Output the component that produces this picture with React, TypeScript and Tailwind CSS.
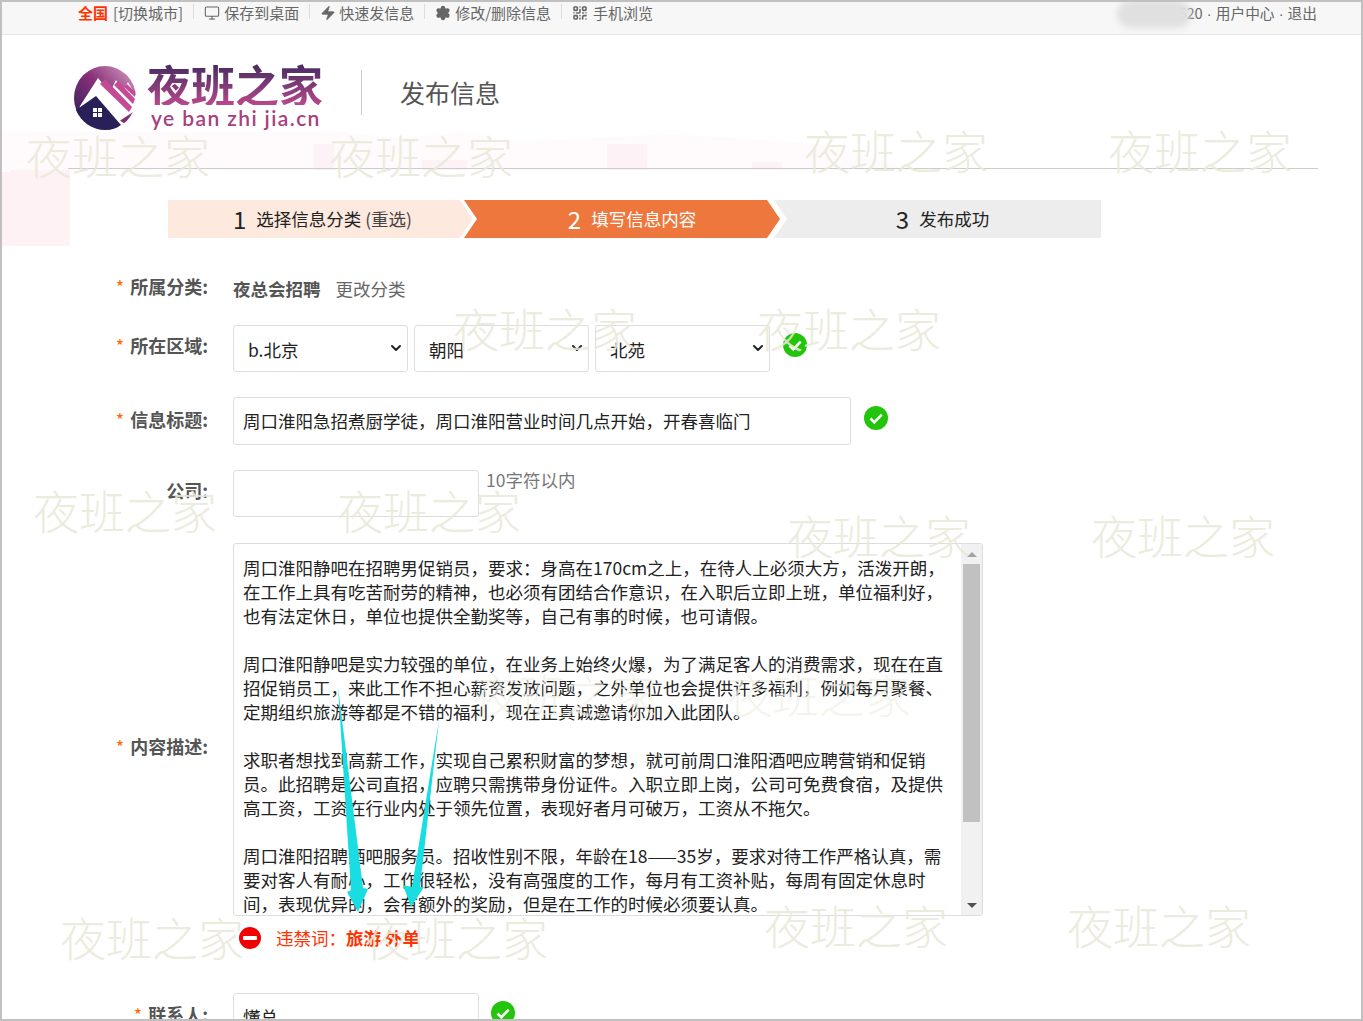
import React from 'react';
import { Monitor, Zap, Settings, QrCode, ChevronDown } from 'lucide-react';

const cjk = 'font-["Noto_Sans_CJK_SC","Liberation_Sans",sans-serif]';

const marks = [
  'left-[24px] top-[125px]',
  'left-[327px] top-[125px]',
  'left-[802px] top-[120px]',
  'left-[1106px] top-[120px]',
  'left-[451px] top-[298px]',
  'left-[755px] top-[298px]',
  'left-[31px] top-[480px]',
  'left-[335px] top-[480px]',
  'left-[785px] top-[505px]',
  'left-[1089px] top-[505px]',
  'left-[58px] top-[907px]',
  'left-[362px] top-[907px]',
  'left-[762px] top-[895px]',
  'left-[1065px] top-[895px]',
];

const descLines = [
  '周口淮阳静吧在招聘男促销员，要求：身高在170cm之上，在待人上必须大方，活泼开朗，',
  '在工作上具有吃苦耐劳的精神，也必须有团结合作意识，在入职后立即上班，单位福利好，',
  '也有法定休日，单位也提供全勤奖等，自己有事的时候，也可请假。',
  '',
  '周口淮阳静吧是实力较强的单位，在业务上始终火爆，为了满足客人的消费需求，现在在直',
  '招促销员工，来此工作不担心薪资发放问题，之外单位也会提供许多福利，例如每月聚餐、',
  '定期组织旅游等都是不错的福利，现在正真诚邀请你加入此团队。',
  '',
  '求职者想找到高薪工作，实现自己累积财富的梦想，就可前周口淮阳酒吧应聘营销和促销',
  '员。此招聘是公司直招，应聘只需携带身份证件。入职立即上岗，公司可免费食宿，及提供',
  '高工资，工资在行业内处于领先位置，表现好者月可破万，工资从不拖欠。',
  '',
  '周口淮阳招聘酒吧服务员。招收性别不限，年龄在18——35岁，要求对待工作严格认真，需',
  '要对客人有耐心，工作很轻松，没有高强度的工作，每月有工资补贴，每周有固定休息时',
  '间，表现优异的，会有额外的奖励，但是在工作的时候必须要认真。',
];

const OkIcon = () => (
  <svg viewBox="0 0 24 24" className="w-6 h-6 shrink-0">
    <circle cx="12" cy="12" r="12" fill="#22c40c" />
    <path d="M6.5 12.5l3.8 3.8 7.4-7.6" fill="none" stroke="#fff" strokeWidth="2.6" />
  </svg>
);

const Logo = () => (
  <svg viewBox="0 0 62 64" className="w-[62px] h-[64px] shrink-0">
    <defs>
      <linearGradient id="lg" x1="0" y1="1" x2="1" y2="0">
        <stop offset="0" stopColor="#231f55" />
        <stop offset="0.55" stopColor="#8a2f78" />
        <stop offset="1" stopColor="#d9a8c8" />
      </linearGradient>
    </defs>
    <ellipse cx="31" cy="32" rx="31" ry="32" fill="url(#lg)" />
    <path d="M6 40L24 12 36 26l6-12 7 10 5-8 8 14v14L32 64H2z" fill="#fff" />
    <path d="M26 18L55 46l3-5-27-28z" fill="#c54a96" />
    <path d="M40 19l19 19 2-5-17-18z" fill="#c54a96" />
    <path d="M50 21l11 10v-5l-8-8z" fill="#c54a96" />
    <path d="M15 33L51 58l-6 3-30-22z" fill="#fff" />
    <path d="M2 44L22 30l25 29c-4 3-10 5-16 5C18 64 7 56 2 44z" fill="#2a2058" />
    <path d="M19 42h9v9h-9z" fill="#fff" />
    <path d="M23 42h1v9h-1zM19 46h9v1h-9z" fill="#2a2058" />
  </svg>
);

const Sep = () => <span className="w-px h-[15px] bg-[#ddd] mx-[10px]" />;

const Dot = () => <span className='font-["Liberation_Sans",sans-serif]'> · </span>;

const Label = ({ text, star = true, className = '' }: { text: string; star?: boolean; className?: string }) => (
  <div className={`w-[206px] shrink-0 text-right text-[18px] leading-6 font-bold text-[#555] ${className}`}>
    {star && <span className="text-[#f60] font-normal mr-[6px]">*</span>}
    {text}
  </div>
);

const Area = ({ value }: { value: string }) => (
  <div className="relative">
    <select
      defaultValue={value}
      className="appearance-none w-[175px] h-[47px] pl-[14px] pt-[3px] border border-[#ddd] rounded-[3px] bg-white text-[17.5px] text-[#222]"
    >
      <option>{value}</option>
    </select>
    <ChevronDown className="absolute right-[4px] top-[15px] w-4 h-4 text-[#222] pointer-events-none" strokeWidth={3} />
  </div>
);

export default function App() {
  return (
    <div className={`relative w-[1363px] h-[1021px] overflow-hidden bg-white border-2 border-[#c0c0c0] ${cjk}`}>
      {/* faint skyline behind the header */}
      <svg className="absolute left-0 top-0 w-[1100px] h-[250px]" viewBox="0 0 1100 250">
        <path d="M0 170h8v-8h60v82H0z" fill="#fef2f5" />
        <path d="M0 130h340l60 6 60-6 60 10 150-8 150 10 60 16 20 10H0z" fill="#fffafb" />
        <path d="M312 142h20v26h-20zM420 158h45v10h-45zM605 142h40v26h-40zM750 160h30v8h-30z" fill="#fdf2f5" />
      </svg>

      {/* top bar */}
      <div className="relative h-[33px] bg-[#f7f7f7] border-b border-[#e6e6e6] flex items-start pt-[2px] pl-[76px] pr-[44px] text-[15px] leading-[18px] text-[#666]">
        <span className="text-[#f30] font-bold">全国</span>
        <span className="ml-[5px]">[切换城市]</span>
        <Sep />
        <Monitor className="w-[16px] h-[16px] mr-[4px] mt-px" strokeWidth={1.6} />
        <span>保存到桌面</span>
        <Sep />
        <Zap className="w-[16px] h-[16px] mr-[3px] mt-px fill-[#666]" strokeWidth={1} />
        <span>快速发信息</span>
        <Sep />
        <Settings className="w-[16px] h-[16px] mr-[4px] mt-px fill-[#666] text-[#666]" strokeWidth={2} />
        <span>修改/删除信息</span>
        <Sep />
        <QrCode className="w-[16px] h-[16px] mr-[5px] mt-px" strokeWidth={2.4} />
        <span>手机浏览</span>
        <span className="ml-auto relative whitespace-nowrap text-[14.7px]">
          <span className="inline-block w-[90px] text-right">520</span><Dot />用户中心<Dot />退出
          <span className="absolute right-[126px] top-[-4px] w-[74px] h-[28px] bg-[#e0e0e0] rounded-full blur-[3px]" />
        </span>
      </div>

      {/* logo row */}
      <div className="relative ml-[66px] w-[1250px] h-[134px] border-b border-[#ccc] pl-[6px] pt-[31px] flex items-start">
        <Logo />
        <div className="ml-[11px] -mt-[3px] w-[180px]">
          <div className="text-[44px] leading-[42px] font-bold bg-linear-to-b from-[#43295f] to-[#b8488c] bg-clip-text text-transparent whitespace-nowrap">
            夜班之家
          </div>
          <div className='pl-[4px] text-[21px] leading-[26px] tracking-[1.4px] font-semibold text-[#a8407f] whitespace-nowrap font-["Lato",sans-serif]'>
            ye ban zhi jia.cn
          </div>
        </div>
        <div className="ml-[34px] mt-[4px] w-px h-[45px] bg-[#ccc]" />
        <div className="ml-[38px] mt-[6px] text-[25px] leading-[40px] text-[#555] whitespace-nowrap">发布信息</div>
      </div>

      {/* steps */}
      <div className="relative ml-[166px] mt-[31px] h-[38px] flex text-[17.5px] text-[#222]">
        <div className="w-[305px] h-full bg-[#fee9df] flex items-center justify-center gap-[10px] pl-[4px] [clip-path:polygon(0_0,292px_0,305px_50%,292px_100%,0_100%)]">
          <span className="text-[24px]">1</span>
          <span>选择信息分类 <span className="text-[#444]">(重选)</span></span>
        </div>
        <div className="w-[316px] h-full -ml-[9px] bg-[#ed773c] text-white flex items-center justify-center gap-[10px] pl-[20px] [clip-path:polygon(0_0,303px_0,316px_50%,303px_100%,0_100%,13px_50%)]">
          <span className="text-[24px]">2</span>
          <span>填写信息内容</span>
        </div>
        <div className="w-[327px] h-full -ml-[6px] bg-[#ededed] flex items-center justify-center gap-[10px] pl-[10px] [clip-path:polygon(0_0,100%_0,100%_100%,0_100%,13px_50%)]">
          <span className="text-[24px]">3</span>
          <span>发布成功</span>
        </div>
      </div>

      {/* form */}
      <div className="relative pt-[37px]">
        <div className="flex gap-[25px] h-[27px] items-start">
          <Label text="所属分类:" className="-mt-px" />
          <div className="-mt-px text-[17.5px] leading-[30px] text-[#666] whitespace-nowrap">
            <span className="font-bold text-[#555]">夜总会招聘</span>
            <span className="ml-[15px]">更改分类</span>
          </div>
        </div>

        <div className="flex gap-[25px] mt-[23px] items-start">
          <Label text="所在区域:" className="mt-[8px]" />
          <div className="flex items-start gap-[6px]">
            <Area value="b.北京" />
            <Area value="朝阳" />
            <Area value="北苑" />
            <div className="ml-[7px] mt-[8px]"><OkIcon /></div>
          </div>
        </div>

        <div className="flex gap-[25px] mt-[25px] items-start">
          <Label text="信息标题:" className="mt-[10px]" />
          <input
            readOnly
            value="周口淮阳急招煮厨学徒，周口淮阳营业时间几点开始，开春喜临门"
            className="w-[618px] h-[48px] pl-[9px] pb-[2px] border border-[#ddd] rounded-[3px] bg-white text-[17.5px] text-[#222]"
          />
          <div className="-ml-[12px] mt-[9px]"><OkIcon /></div>
        </div>

        <div className="flex gap-[25px] mt-[25px] items-start">
          <Label text="公司:" star={false} className="mt-[8px]" />
          <input readOnly className="w-[246px] h-[47px] border border-[#ddd] rounded-[3px] bg-white" />
          <div className="-ml-[18px] -mt-[2px] text-[17.5px] leading-6 text-[#777]">10字符以内</div>
        </div>

        <div className="flex gap-[25px] mt-[26px] items-start">
          <Label text="内容描述:" className="mt-[191px]" />
          <div className="w-[750px] h-[373px] flex border border-[#ddd] rounded-[3px] bg-white overflow-hidden">
            <div className="flex-1 pl-[9px] pt-[12px] text-[17.5px] leading-6 text-[#222] whitespace-nowrap overflow-hidden">
              {descLines.map((line, i) => (
                <div key={i} className="h-6">{line}</div>
              ))}
            </div>
            <div className="w-[21px] h-full bg-[#f1f1f1] flex flex-col items-center">
              <div className="h-[20px] flex items-center justify-center">
                <div className="w-0 h-0 border-x-[5px] border-x-transparent border-b-[5px] border-b-[#a3a3a3]" />
              </div>
              <div className="w-[17px] h-[258px] bg-[#c1c1c1]" />
              <div className="mt-auto h-[20px] flex items-center justify-center">
                <div className="w-0 h-0 border-x-[5px] border-x-transparent border-t-[5px] border-t-[#505050]" />
              </div>
            </div>
          </div>
        </div>

        <div className="flex items-center h-[25px] mt-[9px] ml-[237px] text-[17.5px] leading-6 text-[#f30] whitespace-nowrap">
          <svg viewBox="0 0 22 22" className="w-[22px] h-[22px] shrink-0">
            <circle cx="11" cy="11" r="11" fill="#f00000" />
            <rect x="4" y="9" width="14" height="4" rx="1" fill="#fff" />
          </svg>
          <span className="ml-[15px]">违禁词：</span>
          <span className="font-bold">旅游 外单</span>
        </div>

        <div className="flex gap-[25px] mt-[43px] items-start">
          <Label text="联系人:" className="mt-[9px]" />
          <input
            readOnly
            value="懂总"
            className="w-[246px] h-[47px] pl-[9px] border border-[#ddd] rounded-[3px] bg-white text-[17.5px] text-[#222]"
          />
          <div className="-ml-[13px] mt-[8px]"><OkIcon /></div>
        </div>
      </div>

      {/* watermarks */}
      {marks.map(pos => (
        <div
          key={pos}
          className={`absolute ${pos} text-[46px] leading-[54px] font-extralight text-[#e9e9da]/90 whitespace-nowrap pointer-events-none`}
        >
          夜班之家
        </div>
      ))}
      <div className="absolute left-[471px] top-[664px] text-[46px] leading-[54px] font-extralight text-[#f0f0e4]/70 whitespace-nowrap">夜班之家</div>
      <div className="absolute left-[725px] top-[664px] text-[46px] leading-[54px] font-extralight text-[#f0f0e4]/70 whitespace-nowrap">夜班之家</div>

      {/* annotation arrows */}
      <svg className="absolute left-[-2px] top-[-2px] w-[1363px] h-[1021px] pointer-events-none" viewBox="0 0 1363 1021">
        <path d="M338 687L351 890 347 892 358 912 368 889 363 888z" fill="#19dde0" />
        <path d="M439 720L412 887 403 885 411 907 424 887 420 887z" fill="#19dde0" />
      </svg>
    </div>
  );
}
